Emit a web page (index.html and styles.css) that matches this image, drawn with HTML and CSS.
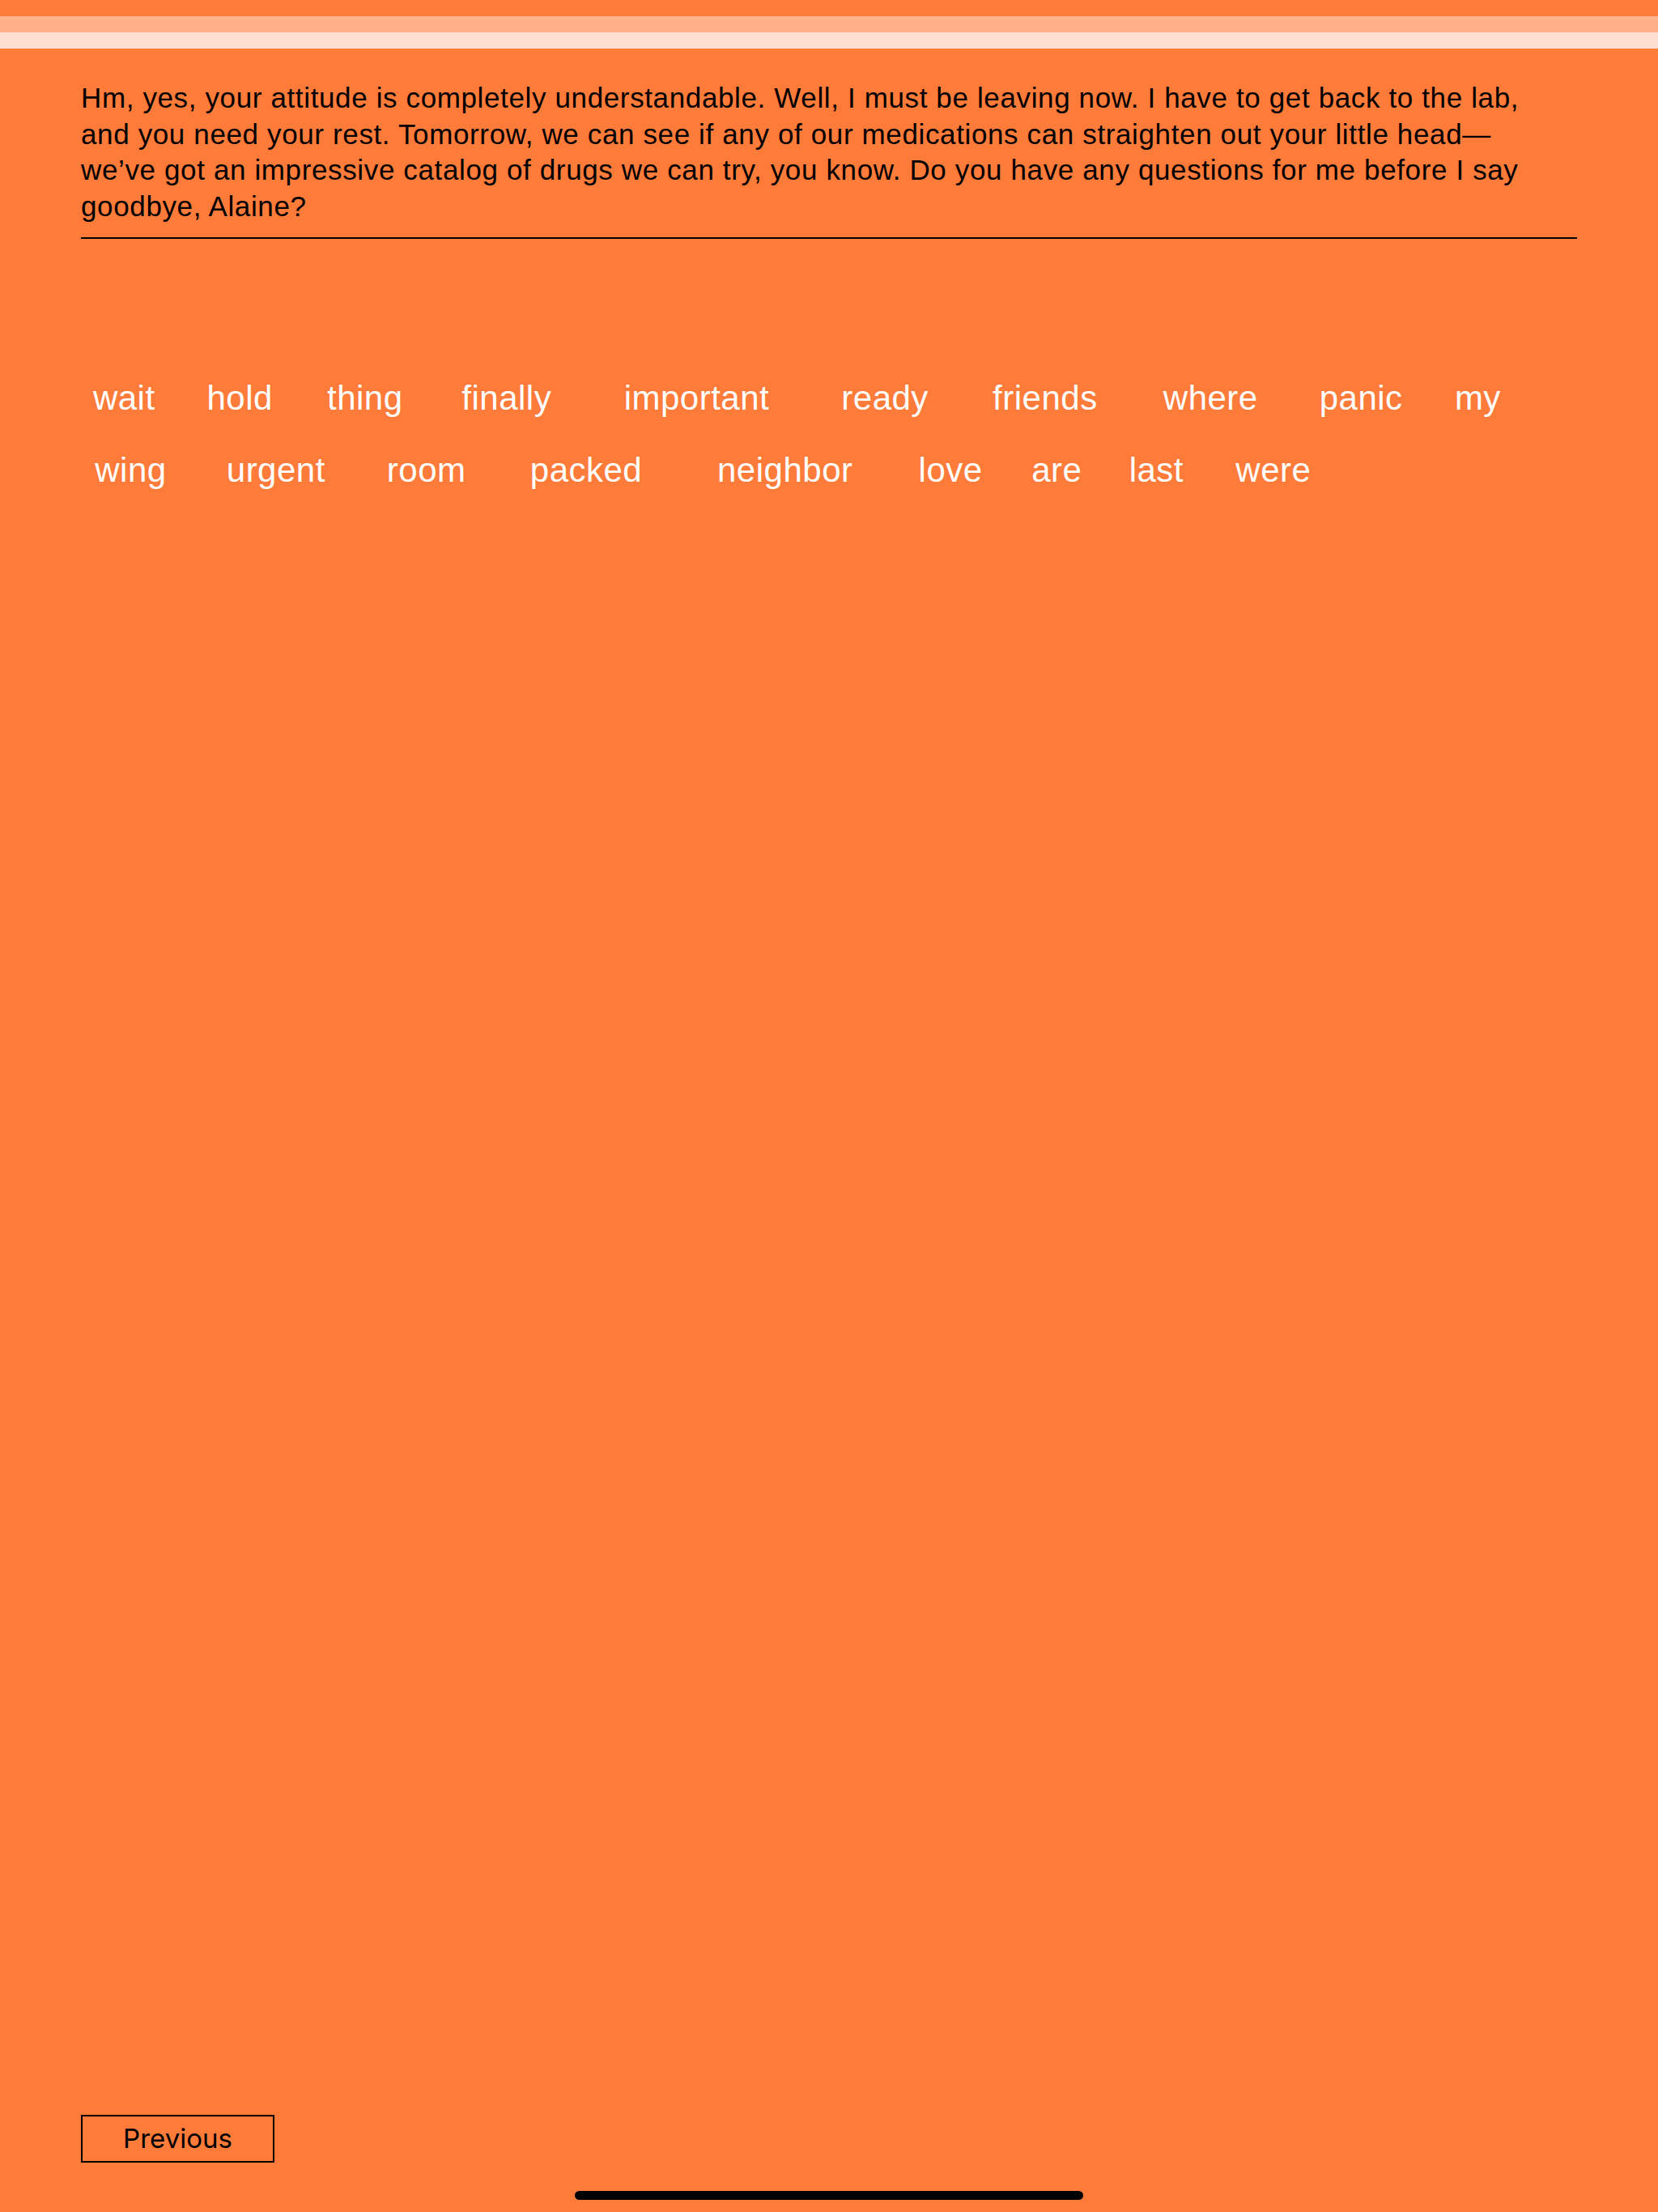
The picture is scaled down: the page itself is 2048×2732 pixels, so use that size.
FILE: index.html
```html
<!DOCTYPE html>
<html lang="en">
<head>
<meta charset="utf-8">
<title>Dialogue</title>
<link rel="stylesheet" href="styles.css">
</head>
<body>
<div class="screen">
  <div class="progress">
    <div class="band band-mid"></div>
    <div class="band band-light"></div>
  </div>
  <main class="content">
    <p class="dialogue">Hm, yes, your attitude is completely understandable. Well, I must be leaving now. I have to get back to the lab, and you need your rest. Tomorrow, we can see if any of our medications can straighten out your little head—we’ve got an impressive catalog of drugs we can try, you know. Do you have any questions for me before I say goodbye, Alaine?</p>
    <div class="words">
      <span class="word" data-w="wait"><span class="word-text">wait</span></span>
      <span class="word" data-w="hold"><span class="word-text">hold</span></span>
      <span class="word" data-w="thing"><span class="word-text">thing</span></span>
      <span class="word" data-w="finally"><span class="word-text">finally</span></span>
      <span class="word" data-w="important"><span class="word-text">important</span></span>
      <span class="word" data-w="ready"><span class="word-text">ready</span></span>
      <span class="word" data-w="friends"><span class="word-text">friends</span></span>
      <span class="word" data-w="where"><span class="word-text">where</span></span>
      <span class="word" data-w="panic"><span class="word-text">panic</span></span>
      <span class="word" data-w="my"><span class="word-text">my</span></span>
      <span class="word" data-w="wing"><span class="word-text">wing</span></span>
      <span class="word" data-w="urgent"><span class="word-text">urgent</span></span>
      <span class="word" data-w="room"><span class="word-text">room</span></span>
      <span class="word" data-w="packed"><span class="word-text">packed</span></span>
      <span class="word" data-w="neighbor"><span class="word-text">neighbor</span></span>
      <span class="word" data-w="love"><span class="word-text">love</span></span>
      <span class="word" data-w="are"><span class="word-text">are</span></span>
      <span class="word" data-w="last"><span class="word-text">last</span></span>
      <span class="word" data-w="were"><span class="word-text">were</span></span>
    </div>
  </main>
  <footer class="footer">
    <button class="btn-prev" type="button">Previous</button>
  </footer>
  <div class="home-indicator"></div>
</div>
</body>
</html>
```
FILE: styles.css
```css
html, body {
  margin: 0;
  padding: 0;
  background: #ff7b3a;
}

.screen {
  position: relative;
  width: 2048px;
  height: 2732px;
  background: #ff7b3a;
  display: flex;
  flex-direction: column;
  font-family: "Liberation Sans", Arial, sans-serif;
  overflow: hidden;
}

.progress {
  padding-top: 20px;
  display: flex;
  flex-direction: column;
}

.band {
  height: 20px;
}

.band-mid {
  background: #ffb28a;
}

.band-light {
  background: #ffdfd0;
}

.content {
  flex: 1;
  padding: 0 100px;
}

.dialogue {
  margin: 39px 0 0;
  padding: 0 50px 16px 0;
  border-bottom: 2px solid #000;
  font-size: 35px;
  line-height: 44.5px;
  letter-spacing: 0.018em;
  color: #000;
}

.words {
  margin-top: 152px;
  display: flex;
  flex-wrap: wrap;
  column-gap: 33px;
  row-gap: 0;
}

.word {
  display: inline-grid;
  justify-items: center;
  color: #fff;
  font-size: 42px;
  line-height: 89px;
  letter-spacing: 0.012em;
}

.word::before {
  content: attr(data-w);
  grid-area: 1 / 1;
  font-size: 1.4em;
  line-height: 0;
  height: 0;
  overflow: hidden;
  visibility: hidden;
}

.word-text {
  grid-area: 1 / 1;
}

.footer {
  padding: 0 100px 61px;
}

.btn-prev {
  box-sizing: border-box;
  width: 239px;
  height: 59px;
  padding: 0;
  background: transparent;
  border: 2px solid #000;
  border-radius: 0;
  color: #000;
  font-family: Inter, "Liberation Sans", sans-serif;
  font-size: 33px;
  line-height: 1;
}

.home-indicator {
  position: absolute;
  left: 710px;
  top: 2706px;
  width: 628px;
  height: 11px;
  border-radius: 6px;
  background: #000;
}
```
